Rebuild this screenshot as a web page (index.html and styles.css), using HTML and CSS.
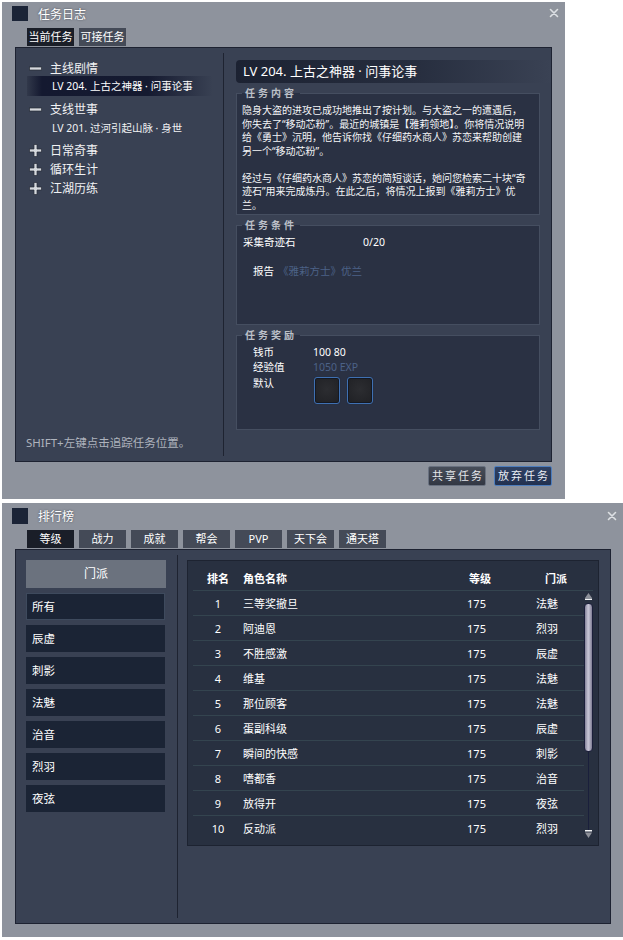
FILE: index.html
```html
<!DOCTYPE html>
<html lang="zh">
<head>
<meta charset="utf-8">
<title>任务日志 / 排行榜</title>
<link rel="stylesheet" href="styles.css">
</head>
<body>
<div class="page">
  <section class="win win-quest">
    <header class="win-title">
      <span class="win-icon"></span>
      <h1 class="win-name">任务日志</h1>
      <span class="win-close"><svg width="10" height="10" viewBox="0 0 10 10"><path d="M1.5 1.5l7 7M8.5 1.5l-7 7" stroke="#8f949c" stroke-width="3.2" stroke-linecap="round"/><path d="M1.5 1.5l7 7M8.5 1.5l-7 7" stroke="#dde0e4" stroke-width="1.6" stroke-linecap="round"/></svg></span>
    </header>
    <nav class="tabs">
      <span class="tab tab-active">当前任务</span>
      <span class="tab">可接任务</span>
    </nav>
    <div class="panel quest-panel">
      <div class="quest-left">
        <div class="tree">
          <div class="tree-group"><svg class="tree-icon" width="13" height="13" viewBox="0 0 13 13"><rect x="0.5" y="5" width="12" height="3" fill="#d6d9de" stroke="#262b36" stroke-width="0.7"/></svg><span>主线剧情</span></div>
          <div class="tree-item tree-item-sel">LV 204. 上古之神器 · 问事论事</div>
          <div class="tree-group tree-gap"><svg class="tree-icon" width="13" height="13" viewBox="0 0 13 13"><rect x="0.5" y="5" width="12" height="3" fill="#d6d9de" stroke="#262b36" stroke-width="0.7"/></svg><span>支线世事</span></div>
          <div class="tree-item">LV 201. 过河引起山脉 · 身世</div>
          <div class="tree-group tree-gap"><svg class="tree-icon" width="13" height="13" viewBox="0 0 13 13"><path d="M5 0.5h3v4.5h4.5v3H8v4.5H5V8H0.5V5H5z" fill="#d6d9de" stroke="#262b36" stroke-width="0.7"/></svg><span>日常奇事</span></div>
          <div class="tree-group"><svg class="tree-icon" width="13" height="13" viewBox="0 0 13 13"><path d="M5 0.5h3v4.5h4.5v3H8v4.5H5V8H0.5V5H5z" fill="#d6d9de" stroke="#262b36" stroke-width="0.7"/></svg><span>循环生计</span></div>
          <div class="tree-group"><svg class="tree-icon" width="13" height="13" viewBox="0 0 13 13"><path d="M5 0.5h3v4.5h4.5v3H8v4.5H5V8H0.5V5H5z" fill="#d6d9de" stroke="#262b36" stroke-width="0.7"/></svg><span>江湖历练</span></div>
        </div>
        <p class="hint">SHIFT+左键点击追踪任务位置。</p>
      </div>
      <div class="vdivider"></div>
      <div class="quest-right">
        <div class="quest-title">LV 204. 上古之神器 · 问事论事</div>
        <fieldset class="qbox">
          <legend>任务内容</legend>
          <p class="desc">隐身大盗的进攻已成功地推出了按计划。与大盗之一的遭遇后，<br>你失去了“移动芯粉”。最近的城镇是【雅莉领地】。你将情况说明<br>给《勇士》沉明，他告诉你找《仔细药水商人》苏恋来帮助创建<br>另一个“移动芯粉”。<br><br>经过与《仔细药水商人》苏恋的简短谈话，她问您检索二十块“奇<br>迹石”用来完成炼丹。在此之后，将情况上报到《雅莉方士》优<br>兰。</p>
        </fieldset>
        <fieldset class="qbox qbox-cond">
          <legend>任务条件</legend>
          <div class="cond-row"><span class="cond-name">采集奇迹石</span><span>0/20</span></div>
          <div class="cond-report"><span>报告</span><span class="link">《雅莉方士》优兰</span></div>
        </fieldset>
        <fieldset class="qbox qbox-reward">
          <legend>任务奖励</legend>
          <div class="reward-grid">
            <span>钱币</span><span>100 80</span>
            <span>经验值</span><span class="link">1050 EXP</span>
            <span class="reward-def">默认</span>
            <span class="slots"><span class="slot"></span><span class="slot"></span></span>
          </div>
        </fieldset>
      </div>
    </div>
    <div class="actions">
      <span class="btn btn-gray">共享任务</span>
      <span class="btn btn-blue">放弃任务</span>
    </div>
  </section>

  <section class="win win-rank">
    <header class="win-title">
      <span class="win-icon"></span>
      <h1 class="win-name">排行榜</h1>
      <span class="win-close"><svg width="10" height="10" viewBox="0 0 10 10"><path d="M1.5 1.5l7 7M8.5 1.5l-7 7" stroke="#8f949c" stroke-width="3.2" stroke-linecap="round"/><path d="M1.5 1.5l7 7M8.5 1.5l-7 7" stroke="#dde0e4" stroke-width="1.6" stroke-linecap="round"/></svg></span>
    </header>
    <nav class="tabs">
      <span class="tab tab-active">等级</span>
      <span class="tab">战力</span>
      <span class="tab">成就</span>
      <span class="tab">帮会</span>
      <span class="tab">PVP</span>
      <span class="tab">天下会</span>
      <span class="tab">通天塔</span>
    </nav>
    <div class="panel rank-panel">
      <div class="rank-left">
        <div class="rank-head">门派</div>
        <div class="rank-item rank-item-sel">所有</div>
        <div class="rank-item">辰虚</div>
        <div class="rank-item">刺影</div>
        <div class="rank-item">法魅</div>
        <div class="rank-item">治音</div>
        <div class="rank-item">烈羽</div>
        <div class="rank-item">夜弦</div>
      </div>
      <div class="vdivider"></div>
      <div class="rank-right">
        <div class="rk-table">
          <div class="rk-head">
            <span class="c-rank">排名</span><span class="c-name">角色名称</span><span class="c-lvl">等级</span><span class="c-fac">门派</span>
          </div>
          <div class="rk-body">
            <div class="rk-rows">
              <div class="rk-row"><span class="c-rank">1</span><span class="c-name">三等奖撤旦</span><span class="c-lvl">175</span><span class="c-fac">法魅</span></div>
              <div class="rk-row"><span class="c-rank">2</span><span class="c-name">阿迪恩</span><span class="c-lvl">175</span><span class="c-fac">烈羽</span></div>
              <div class="rk-row"><span class="c-rank">3</span><span class="c-name">不胜感激</span><span class="c-lvl">175</span><span class="c-fac">辰虚</span></div>
              <div class="rk-row"><span class="c-rank">4</span><span class="c-name">维基</span><span class="c-lvl">175</span><span class="c-fac">法魅</span></div>
              <div class="rk-row"><span class="c-rank">5</span><span class="c-name">那位顾客</span><span class="c-lvl">175</span><span class="c-fac">法魅</span></div>
              <div class="rk-row"><span class="c-rank">6</span><span class="c-name">蛋副科级</span><span class="c-lvl">175</span><span class="c-fac">辰虚</span></div>
              <div class="rk-row"><span class="c-rank">7</span><span class="c-name">瞬间的快感</span><span class="c-lvl">175</span><span class="c-fac">刺影</span></div>
              <div class="rk-row"><span class="c-rank">8</span><span class="c-name">嗜都香</span><span class="c-lvl">175</span><span class="c-fac">治音</span></div>
              <div class="rk-row"><span class="c-rank">9</span><span class="c-name">放得开</span><span class="c-lvl">175</span><span class="c-fac">夜弦</span></div>
              <div class="rk-row"><span class="c-rank">10</span><span class="c-name">反动派</span><span class="c-lvl">175</span><span class="c-fac">烈羽</span></div>
            </div>
            <div class="rk-scroll">
              <svg width="9" height="7" viewBox="0 0 9 7"><path d="M4.5 0L8 5H1z" fill="#8d9099"/><rect x="1" y="5.5" width="7" height="1.5" fill="#f2f3f5"/></svg>
              <span class="rk-thumb"></span>
              <span class="rk-track"></span>
              <svg width="9" height="8" viewBox="0 0 9 8"><rect x="1" y="0" width="7" height="1.5" fill="#f2f3f5"/><path d="M1 2.5h7L4.5 8z" fill="#8d9099"/></svg>
            </div>
          </div>
        </div>
      </div>
    </div>
  </section>
</div>
</body>
</html>
```
FILE: styles.css
```css
* { box-sizing: border-box; }

body {
  margin: 0;
  background: #ffffff;
  color: #ffffff;
  font-family: "Noto Sans", "Noto Sans CJK SC", sans-serif;
}

.page {
  padding: 2px 0 0 2px;
  display: flex;
  flex-direction: column;
  gap: 4px;
}

/* ---------- window chrome ---------- */
.win {
  background: #8e939d;
  display: flex;
  flex-direction: column;
}
.win-quest { width: 563px; height: 497px; }
.win-rank { width: 621px; height: 434px; }

.win-title {
  display: flex;
  align-items: center;
  padding-left: 10px;
}
.win-quest .win-title { height: 26px; }
.win-rank .win-title { height: 27px; }

.win-icon {
  width: 16px;
  height: 15px;
  background: #1b2437;
  align-self: flex-start;
  margin-top: 4px;
}
.win-rank .win-icon { height: 16px; margin-top: 5px; }

.win-name {
  margin: 0 0 0 10px;
  font-size: 12px;
  font-weight: normal;
  line-height: 16px;
  text-shadow: 0 0 2px rgba(20, 24, 34, 0.6);
}

.win-close {
  margin-left: auto;
  align-self: flex-start;
  display: flex;
}
.win-quest .win-close { margin-top: 6px; margin-right: 6px; }
.win-rank .win-close { margin-top: 8px; margin-right: 6px; }

.tabs {
  display: flex;
  gap: 5px;
  margin-left: 25px;
  height: 18px;
}
.tab {
  width: 47px;
  height: 18px;
  background: #444a57;
  font-size: 11px;
  line-height: 18px;
  text-align: center;
}
.tab-active { background: #1a1e28; }

.panel {
  margin: 1px 0 0 13px;
  background: #394153;
  border: 1px solid #1d2231;
  display: flex;
}
.quest-panel { width: 537px; height: 415px; }
.rank-panel { width: 596px; height: 375px; }

.vdivider {
  width: 1px;
  background: #1e2331;
  margin: 5px 0;
}

/* ---------- quest log ---------- */
.quest-left {
  width: 207px;
  display: flex;
  flex-direction: column;
  justify-content: space-between;
}

.tree {
  padding: 11px 0 0 13px;
  display: flex;
  flex-direction: column;
  gap: 1px;
}
.tree-group {
  display: flex;
  align-items: center;
  gap: 8px;
  height: 18px;
  font-size: 12px;
  color: #f1f2f4;
}
.tree-icon { flex: none; }
.tree-gap { margin-top: 3px; }

.tree-item {
  height: 18px;
  line-height: 18px;
  padding-left: 23px;
  font-size: 10.5px;
  color: #f1f2f4;
  white-space: nowrap;
}
.tree-item-sel {
  margin: -2px 0 0 -2px;
  width: 186px;
  height: 20px;
  line-height: 20px;
  padding-left: 25px;
  color: #ffffff;
  background: linear-gradient(90deg, rgba(18, 22, 40, 0.2) 0%, #141930 8%, #151a30 65%, rgba(21, 26, 48, 0) 100%);
}

.hint {
  margin: 0;
  padding: 0 0 10px 10px;
  font-size: 11.5px;
  line-height: 16px;
  color: #aeb3bd;
}

.quest-right {
  width: 327px;
  padding: 12px 11px 0 12px;
  display: flex;
  flex-direction: column;
}

.quest-title {
  height: 23px;
  margin-right: -11px;
  padding-left: 7px;
  font-size: 13px;
  line-height: 23px;
  border-radius: 4px 0 0 4px;
  background: linear-gradient(90deg, #1c2232 0%, #262d3e 55%, #3a4254 100%);
  white-space: nowrap;
}

.qbox {
  margin: 4px 0 0;
  padding: 0 5px 2px;
  min-width: 0;
  border: 1px solid #454e60;
  background: #2a3143;
}
.qbox legend {
  padding: 0 3px;
  font-size: 10px;
  line-height: 12px;
  font-weight: bold;
  letter-spacing: 3px;
  color: #bcc0c8;
}

.desc {
  margin: 0;
  padding-top: 5px;
  font-size: 10px;
  line-height: 13.5px;
  white-space: nowrap;
  color: #f4f5f7;
}

.qbox-cond { padding-bottom: 46px; }
.cond-row {
  display: flex;
  margin-top: 4px;
  padding-left: 1px;
  font-size: 10.5px;
  line-height: 14px;
}
.cond-name { width: 120px; }
.cond-report {
  display: flex;
  gap: 4px;
  margin-top: 15px;
  padding-left: 11px;
  font-size: 10.5px;
  line-height: 14px;
}
.link { color: #4c6287; }

.qbox-reward { padding-bottom: 25px; }
.reward-grid {
  display: grid;
  grid-template-columns: 60px auto;
  row-gap: 1px;
  padding: 4px 0 0 11px;
  font-size: 10.5px;
  line-height: 14px;
}
.reward-def { margin-top: 1px; }
.slots {
  display: flex;
  gap: 7px;
  margin: 2px 0 0 1px;
}
.slot {
  width: 26px;
  height: 27px;
  border: 1px solid #3f70b2;
  border-radius: 3px;
  background: radial-gradient(circle at 50% 45%, #2c2d31 0%, #1f2024 100%);
  box-shadow: inset 0 0 0 1px #141822, 0 0 1px #1b2a44;
}

.actions {
  display: flex;
  justify-content: flex-end;
  gap: 8px;
  margin-top: 4px;
  padding-right: 13px;
}
.btn {
  width: 58px;
  height: 20px;
  padding-left: 2px;
  font-size: 11px;
  line-height: 18px;
  letter-spacing: 2px;
  text-align: center;
  border-radius: 2px;
}
.btn-gray {
  color: #e4e6ea;
  background: linear-gradient(#474d59, #323743);
  border: 1px solid #697180;
}
.btn-blue {
  color: #e8edf5;
  background: linear-gradient(#2f4163, #223150);
  border: 1px solid #4d7dbd;
}

/* ---------- ranking ---------- */
.rank-left {
  width: 161px;
  padding: 10px 0 0 10px;
  display: flex;
  flex-direction: column;
  gap: 5px;
}
.rank-head {
  width: 140px;
  height: 28px;
  background: #6b727e;
  text-align: center;
  font-size: 12px;
  line-height: 28px;
}
.rank-item {
  width: 139px;
  height: 27px;
  background: #1b2435;
  padding-left: 6px;
  font-size: 11.5px;
  line-height: 27px;
}
.rank-item-sel {
  border: 1px solid #3e4a5d;
  padding-left: 5px;
  line-height: 25px;
}

.rank-right {
  flex: 1;
  padding: 10px 11px 0 9px;
}
.rk-table {
  height: 286px;
  border: 1px solid #1d2331;
  background: #283040;
  padding: 0 5px;
}
.rk-head {
  display: flex;
  align-items: center;
  height: 30px;
  padding-top: 5px;
  border-bottom: 1px solid #34444f;
  font-size: 11px;
  font-weight: bold;
}
.rk-body { display: flex; }
.rk-rows { width: 391px; }
.rk-row {
  display: flex;
  align-items: center;
  height: 25px;
  border-bottom: 1px solid #34444f;
  font-size: 11px;
}
.rk-row:last-child {
  height: 24px;
  border-bottom: none;
}

.c-rank { width: 50px; text-align: center; }
.c-name { width: 210px; }
.c-lvl { width: 47px; text-align: center; }
.c-fac { padding-left: 36px; }
.rk-head .c-lvl { padding-left: 7px; }
.rk-head .c-fac { padding-left: 45px; }

.rk-scroll {
  width: 9px;
  height: 249px;
  padding: 2px 0;
  display: flex;
  flex-direction: column;
  align-items: center;
}
.rk-scroll svg { flex: none; }
.rk-thumb {
  flex: none;
  width: 9px;
  height: 149px;
  margin-top: 3px;
  border: 1px solid #1b1f3a;
  border-radius: 4px;
  background: linear-gradient(90deg, #84829a 0%, #c8c6d6 45%, #b3b1c4 65%, #7e7c93 100%);
}
.rk-track {
  flex: 1;
  width: 1px;
  background: #1a1f3b;
}
```
